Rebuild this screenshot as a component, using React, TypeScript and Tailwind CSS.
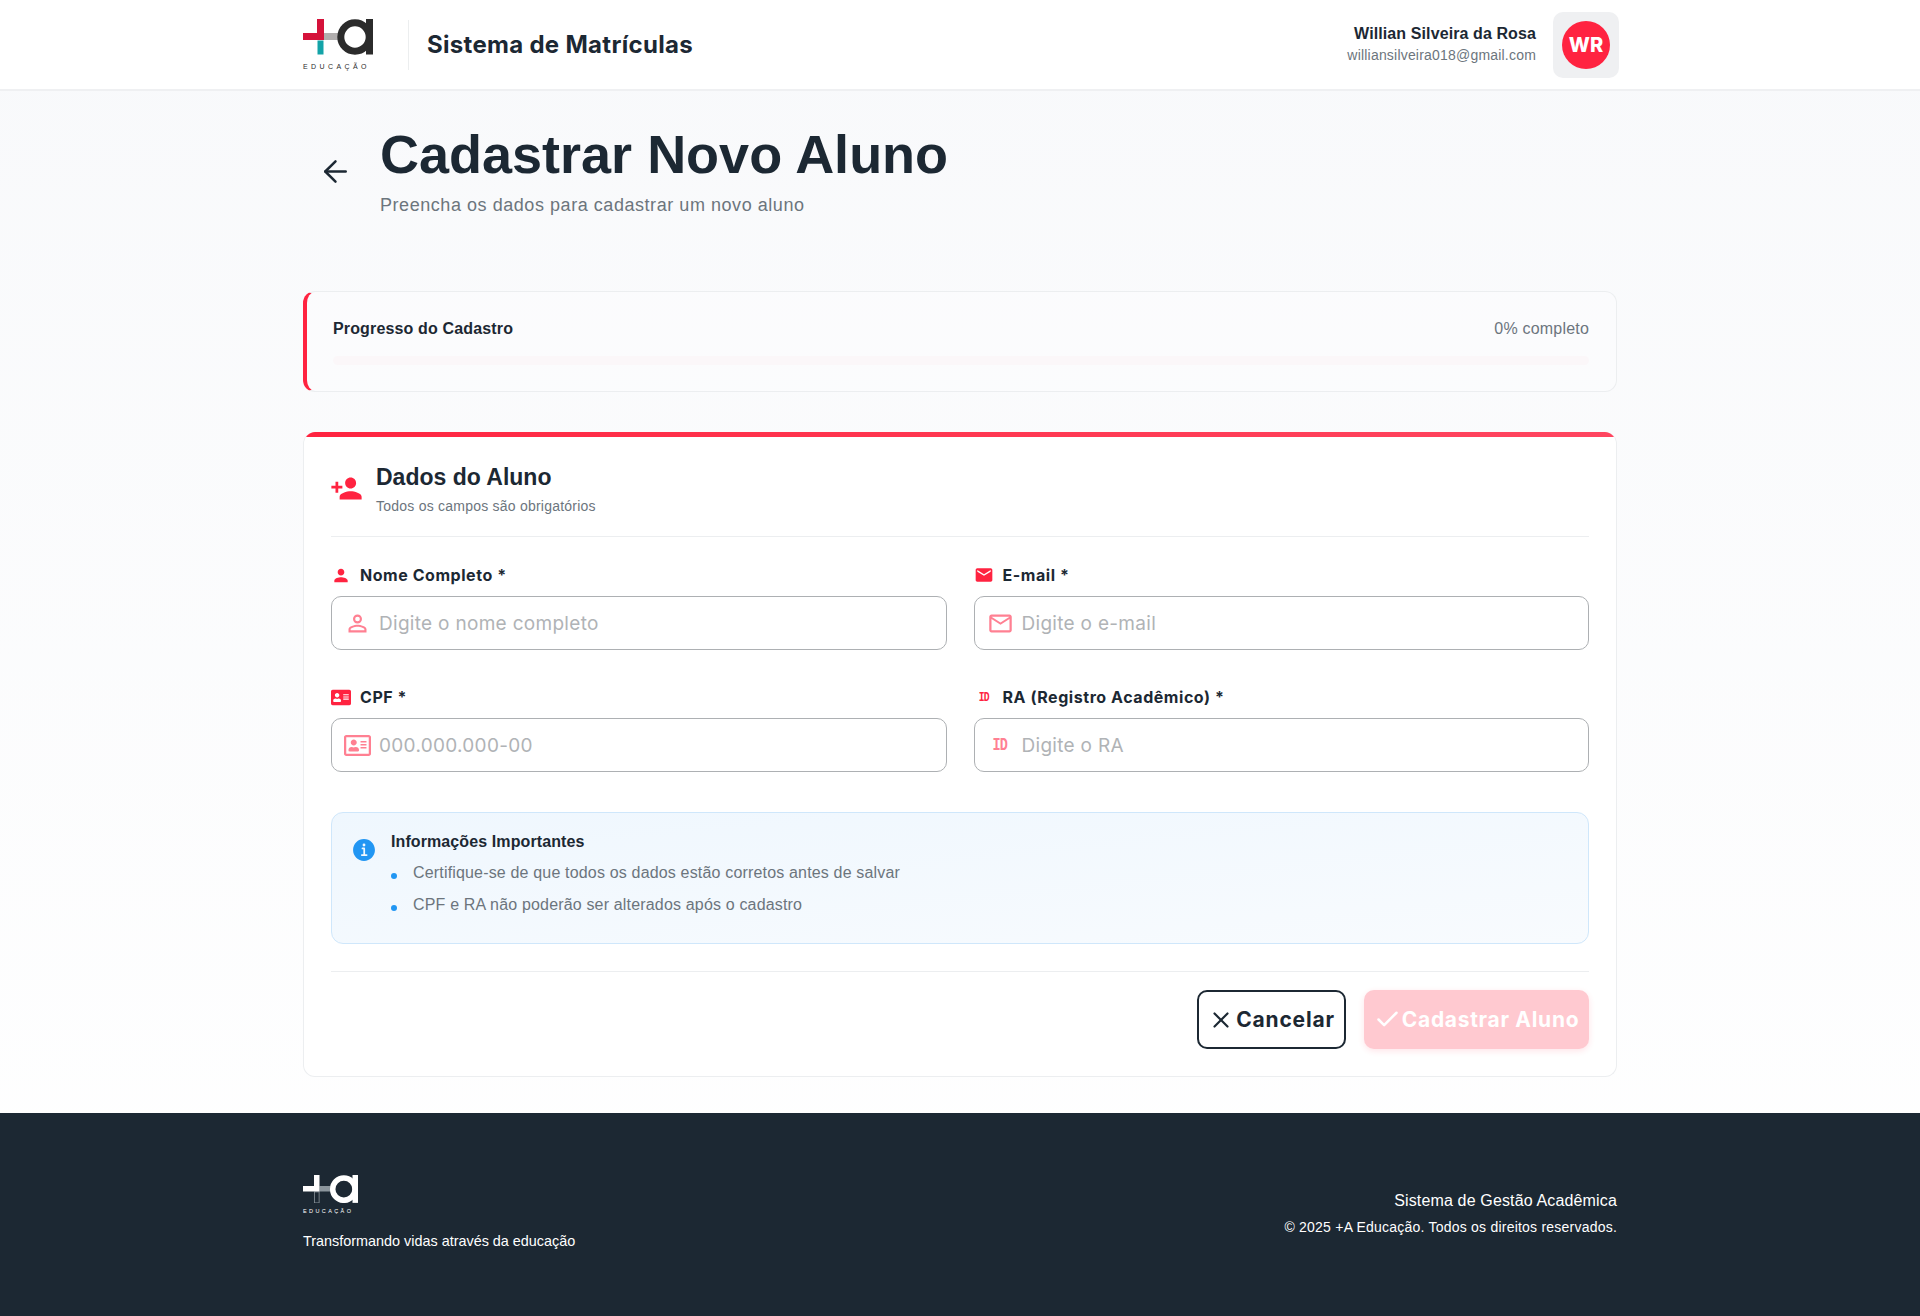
import React from "react";
import { ArrowLeft, X, Check } from "lucide-react";
import { IoInformationCircle } from "react-icons/io5";
import { MdEmail, MdMailOutline, MdPerson, MdPersonAdd, MdPersonOutline } from "react-icons/md";
import { FaAddressCard, FaRegAddressCard } from "react-icons/fa";

const sans = "font-['Liberation_Sans',Arial,sans-serif]";
const display = "font-['Inter',sans-serif]";

function Logo({ footer = false }: { footer?: boolean }) {
  const red = footer ? "#ffffff" : "#d5123a";
  const teal = footer ? "none" : "#13a3a8";
  const grey = footer ? "#8b959c" : "#b1aeae";
  const ink = footer ? "#ffffff" : "#2b2b2b";
  return (
    <svg viewBox="0 0 70 36" className="block w-full" aria-hidden="true">
      <rect x="0" y="14" width="21" height="7" fill={red} />
      <rect x="14" y="0" width="7" height="21" fill={red} />
      <rect x="14.5" y="21.5" width="6" height="14" fill={teal} stroke={footer ? "#8b959c" : "none"} />
      <rect x="21" y="14" width="14" height="7" fill={grey} />
      <circle cx="52" cy="18" r="14.2" fill="none" stroke={ink} strokeWidth="7" />
      <rect x="63" y="0" width="7" height="35.5" fill={ink} />
    </svg>
  );
}

function FieldLabel({ icon, children }: { icon: React.ReactNode; children: React.ReactNode }) {
  return (
    <label className={`flex h-6 items-center gap-[9px] text-[16px] font-bold tracking-[0.55px] text-[#1c2833] ${display}`}>
      <span className="flex w-[20px] justify-center text-[#ff2340]">{icon}</span>
      {children}
    </label>
  );
}

function Field({ label, labelIcon, inputIcon, placeholder }: { label: string; labelIcon: React.ReactNode; inputIcon: React.ReactNode; placeholder: string }) {
  return (
    <div className="flex flex-col gap-[9px]">
      <FieldLabel icon={labelIcon}>{label}</FieldLabel>
      <div className="flex h-[54px] items-center gap-[8px] rounded-[10px] border border-[#adb0b3] bg-white pl-[12px]">
        <span className="flex w-[27px] justify-center text-[#ff8092]">{inputIcon}</span>
        <span className={`mt-[2px] text-[19px] tracking-[0.3px] text-[#b0b3b6] ${display}`}>{placeholder}</span>
      </div>
    </div>
  );
}

const IdMark = ({ size }: { size: string }) => (
  <span className={`inline-block scale-x-75 font-['Liberation_Mono',monospace] font-bold leading-none tracking-[-1px] ${size}`}>ID</span>
);

export default function App() {
  return (
    <div className={`flex min-h-[1316px] flex-col bg-gradient-to-b from-[#f8f9fb] to-white ${sans}`}>
      <header className="h-[91px] border-b-2 border-[#eff0f2] bg-white">
        <div className="mx-auto flex h-full w-[1314px] items-center justify-between">
          <div className="flex items-center">
            <div className="w-[70px]">
              <Logo />
              <p className="mt-[8px] text-[7px] leading-[8px] tracking-[3.4px] whitespace-nowrap text-[#2b2b2b]">EDUCAÇÃO</p>
            </div>
            <div className="mr-[18px] ml-[35px] h-[50px] w-px bg-[#eceeef]" />
            <h2 className={`text-[24px] font-bold tracking-[0.3px] text-[#1c2833] ${display}`}>Sistema de Matrículas</h2>
          </div>
          <div className="-mr-[2px] flex items-center gap-[17px]">
            <div className="-mt-[2px] text-right">
              <p className="text-[16px] leading-[22px] font-bold tracking-[0.1px] text-[#1c2833]">Willian Silveira da Rosa</p>
              <p className="text-[14px] leading-[20px] tracking-[0.2px] text-[#6c757d]">williansilveira018@gmail.com</p>
            </div>
            <div className="flex h-[66px] w-[66px] items-center justify-center rounded-[10px] bg-[#eff0f2]">
              <div className={`flex h-[48px] w-[48px] items-center justify-center rounded-full bg-[#ff2340] text-[20px] font-extrabold text-white ${display}`}>WR</div>
            </div>
          </div>
        </div>
      </header>

      <main className="mx-auto w-[1314px] flex-1 pt-[27px]">
        <div className="flex items-center">
          <div className="flex w-[77px] justify-center pr-[12px] pt-[5px] text-[#1c2833]">
            <ArrowLeft size={35} strokeWidth={1.7} />
          </div>
          <div>
            <h1 className="text-[54px] leading-[72px] font-bold text-[#1c2833]">Cadastrar Novo Aluno</h1>
            <p className="mt-[1px] text-[18px] leading-[28px] tracking-[0.55px] text-[#6c757d]">Preencha os dados para cadastrar um novo aluno</p>
          </div>
        </div>

        <section className="mt-[72px] h-[101px] rounded-[12px] border border-l-4 border-[#eceef0] border-l-[#ff2340] bg-white/30 pt-[25px] pr-[27px] pl-[26px]">
          <div className="flex items-center justify-between">
            <span className="text-[16px] leading-[24px] font-bold tracking-[0.15px] text-[#1c2833]">Progresso do Cadastro</span>
            <span className="text-[16px] leading-[24px] tracking-[0.2px] text-[#6c757d]">0% completo</span>
          </div>
          <div className="mt-[15px] h-[9px] rounded-full bg-[#fbf7f9]" />
        </section>

        <section className="mt-[40px] h-[645px] overflow-hidden rounded-[12px] border border-t-0 border-[#eceef0] bg-white">
          <div className="h-[5px] bg-gradient-to-r from-[#ff2340] to-[#ff4560]" />
          <div className="px-[27px]">
            <div className="flex h-[100px] items-center gap-[13px] border-b border-[#eceef0] pb-[2px]">
              <MdPersonAdd size={33} className="mt-[6px] -ml-[1px] text-[#ff2340]" />
              <div className="mt-[5px]">
                <h3 className="text-[23px] leading-[32px] font-bold text-[#1c2833]">Dados do Aluno</h3>
                <p className="mt-[3px] text-[14px] leading-[20px] tracking-[0.23px] text-[#6c757d]">Todos os campos são obrigatórios</p>
              </div>
            </div>

            <div className="mt-[26px] grid grid-cols-2 gap-x-[27px] gap-y-[35px]">
              <Field label="Nome Completo *" labelIcon={<MdPerson size={21} />} inputIcon={<MdPersonOutline size={27} />} placeholder="Digite o nome completo" />
              <Field label="E-mail *" labelIcon={<MdEmail size={20} />} inputIcon={<MdMailOutline size={27} />} placeholder="Digite o e-mail" />
              <Field label="CPF *" labelIcon={<FaAddressCard size={21} />} inputIcon={<FaRegAddressCard size={27} />} placeholder="000.000.000-00" />
              <Field label="RA (Registro Acadêmico) *" labelIcon={<IdMark size="text-[13px]" />} inputIcon={<IdMark size="text-[18px]" />} placeholder="Digite o RA" />
            </div>

            <div className="mt-[40px] flex h-[132px] gap-[13px] rounded-[12px] border border-[#cfe7fb] bg-gradient-to-br from-[#eff7fe] to-[#f8fbfe] pt-[17px] pl-[18px]">
              <IoInformationCircle size={28} className="mt-[6px] text-[#2196f3]" />
              <div>
                <h4 className="text-[16px] leading-[24px] font-bold tracking-[0.1px] text-[#1c2833]">Informações Importantes</h4>
                <ul className="mt-[3px] text-[16px] leading-[32px] tracking-[0.17px] text-[#6c757d]">
                  <li className="flex items-center gap-[16px]">
                    <span className="mt-[5px] h-[6px] w-[6px] rounded-full bg-[#2196f3]" />
                    Certifique-se de que todos os dados estão corretos antes de salvar
                  </li>
                  <li className="flex items-center gap-[16px]">
                    <span className="mt-[5px] h-[6px] w-[6px] rounded-full bg-[#2196f3]" />
                    CPF e RA não poderão ser alterados após o cadastro
                  </li>
                </ul>
              </div>
            </div>

            <div className={`mt-[27px] flex justify-end gap-[18px] border-t border-[#eceef0] pt-[18px] ${display}`}>
              <button className="flex h-[59px] w-[149px] items-center justify-center gap-[2px] rounded-[10px] border-2 border-[#1c2833] bg-white text-[21px] font-bold tracking-[0.8px] text-[#1c2833]">
                <X size={26} strokeWidth={2} />
                Cancelar
              </button>
              <button className="flex h-[59px] w-[225px] items-center justify-center gap-[1px] rounded-[10px] bg-[#ffc9d0] text-[21px] font-bold tracking-[0.7px] whitespace-nowrap text-white shadow-[0_2px_6px_rgba(255,35,64,0.12)]">
                <Check size={27} strokeWidth={2.2} />
                Cadastrar Aluno
              </button>
            </div>
          </div>
        </section>
      </main>

      <footer className="mt-[36px] h-[203px] bg-[#1c2833]">
        <div className="mx-auto flex h-full w-[1314px] items-start justify-between pt-[62px] text-white">
          <div>
            <div className="w-[55px]">
              <Logo footer />
              <p className="mt-[5px] text-[5.5px] leading-[7px] tracking-[2.4px] whitespace-nowrap">EDUCAÇÃO</p>
            </div>
            <p className="mt-[15px] text-[14.4px] leading-[22px]">Transformando vidas através da educação</p>
          </div>
          <div className="pt-[14px] text-right">
            <p className="text-[16px] leading-[24px] tracking-[0.15px]">Sistema de Gestão Acadêmica</p>
            <p className="mt-[4px] text-[14px] leading-[20px] tracking-[0.22px]">© 2025 +A Educação. Todos os direitos reservados.</p>
          </div>
        </div>
      </footer>
    </div>
  );
}
